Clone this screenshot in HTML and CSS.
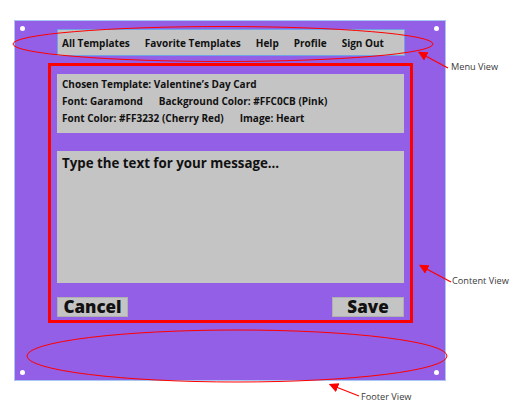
FILE: index.html
```html
<!DOCTYPE html>
<html>
<head>
<meta charset="utf-8">
<link rel="stylesheet" href="styles.css">
</head>
<body>
<div class="stage">
  <div class="panel">
    <span class="dot dot-tl"></span>
    <span class="dot dot-tr"></span>
    <span class="dot dot-bl"></span>
    <span class="dot dot-br"></span>
    <nav class="menu">
      <span>All Templates</span>
      <span>Favorite Templates</span>
      <span>Help</span>
      <span>Profile</span>
      <span>Sign Out</span>
    </nav>
    <section class="content">
      <div class="info">
        <p>Chosen Template: Valentine’s Day Card</p>
        <p><span class="pair">Font: Garamond</span><span>Background Color: #FFC0CB (Pink)</span></p>
        <p><span class="pair">Font Color: #FF3232 (Cherry Red)</span><span>Image: Heart</span></p>
      </div>
      <div class="message">Type the text for your message...</div>
      <div class="actions">
        <button class="btn">Cancel</button>
        <button class="btn btn-save">Save</button>
      </div>
    </section>
  </div>
  <svg class="notes" width="512" height="405" viewBox="0 0 512 405">
    <defs>
      <marker id="ah" markerWidth="8" markerHeight="8" refX="6" refY="4" orient="auto">
        <path d="M0,0 L8,4 L0,8 z" fill="#ff0000"/>
      </marker>
    </defs>
    <ellipse cx="223" cy="44" rx="210" ry="17.5" fill="none" stroke="#ff0000" stroke-width="1"/>
    <ellipse cx="237" cy="356" rx="210" ry="26" fill="none" stroke="#ff0000" stroke-width="1"/>
    <line x1="448" y1="68" x2="420" y2="53" stroke="#ff0000" stroke-width="1.2" marker-end="url(#ah)"/>
    <line x1="451" y1="282" x2="421" y2="266" stroke="#ff0000" stroke-width="1.2" marker-end="url(#ah)"/>
    <line x1="359" y1="396" x2="331" y2="385" stroke="#ff0000" stroke-width="1.2" marker-end="url(#ah)"/>
    <text x="451" y="70" class="lbl">Menu View</text>
    <text x="452" y="284" class="lbl">Content View</text>
    <text x="361" y="400" class="lbl">Footer View</text>
  </svg>
</div>
</body>
</html>
```
FILE: styles.css
```css
* { box-sizing: border-box; }
html, body { margin: 0; padding: 0; background: #ffffff; }
body {
  width: 512px;
  height: 405px;
  overflow: hidden;
  font-family: "Open Sans", "DejaVu Sans", sans-serif;
}
.stage {
  position: relative;
  width: 512px;
  height: 405px;
  padding: 20px 0 0 14px;
}
.panel {
  position: relative;
  width: 432px;
  height: 361px;
  background: #935FE6;
  border: 1px solid #A8C6F2;
  padding: 8px 0 0 33px;
  display: flex;
  flex-direction: column;
}
.dot {
  position: absolute;
  width: 5px;
  height: 5px;
  border-radius: 50%;
  background: #ffffff;
}
.dot-tl { left: 5px; top: 5px; }
.dot-tr { right: 6px; top: 5px; }
.dot-bl { left: 5px; bottom: 5px; }
.dot-br { right: 6px; bottom: 5px; }
.menu {
  margin-left: 9px;
  width: 348px;
  height: 27px;
  background: #C4C4C4;
  border: 1px solid #6EA3E8;
  display: flex;
  align-items: center;
  gap: 15px;
  padding: 0 0 0 4px;
  font-size: 10px;
  font-weight: 700;
  color: #111111;
}
.content {
  margin-top: 7px;
  width: 365px;
  height: 260px;
  border: 3px solid #ff0000;
  padding: 8px 6px 3px 6px;
  display: flex;
  flex-direction: column;
}
.info {
  height: 59px;
  background: #C4C4C4;
  padding: 2px 5px 0 5px;
  font-size: 10px;
  font-weight: 700;
  color: #111111;
}
.info p {
  margin: 0;
  height: 17px;
  line-height: 17px;
  white-space: nowrap;
}
.pair { margin-right: 16px; }
.message {
  margin-top: 18px;
  height: 132px;
  background: #C4C4C4;
  padding: 3px 5px;
  font-size: 13.3px;
  font-weight: 700;
  color: #111111;
  line-height: 18px;
}
.actions {
  margin-top: 14px;
  display: flex;
  justify-content: space-between;
}
.btn {
  height: 20px;
  width: 71px;
  border: 1px solid #B0B0B0;
  background: #C4C4C4;
  font-family: inherit;
  font-size: 17px;
  font-weight: 800;
  color: #111111;
  padding: 0;
  line-height: 18px;
}
.btn-save { width: 72px; }
.notes {
  position: absolute;
  left: 0;
  top: 0;
  pointer-events: none;
}
.lbl {
  font-family: "Open Sans", "DejaVu Sans", sans-serif;
  font-size: 9.2px;
  fill: #3a3a3a;
}
```
